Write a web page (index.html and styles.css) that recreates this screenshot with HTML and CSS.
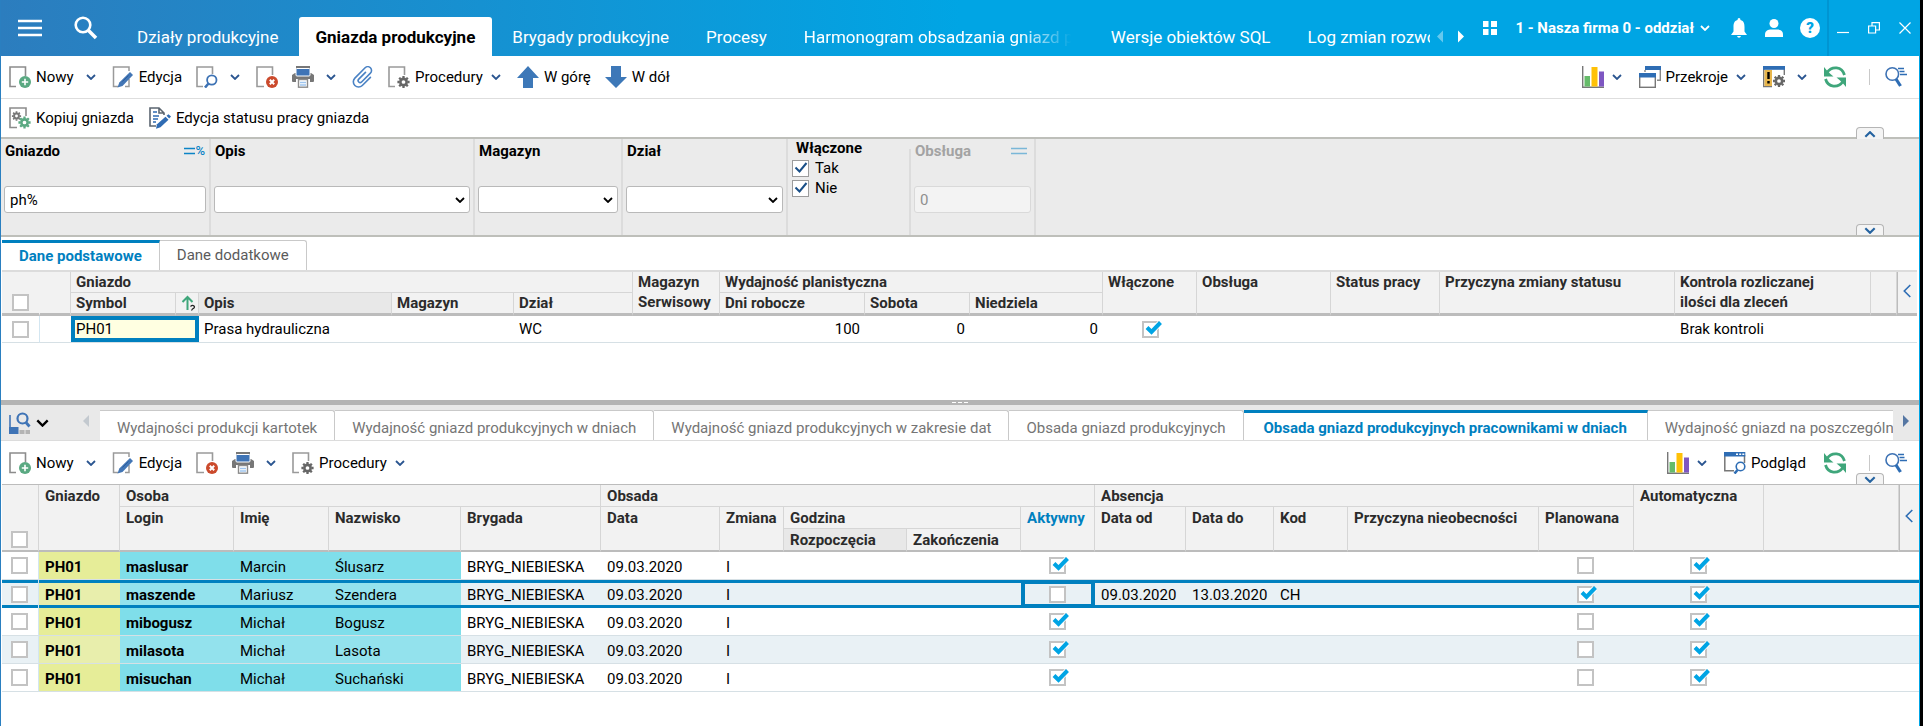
FILE: index.html
```html
<!DOCTYPE html>
<html lang="pl">
<head>
    <meta charset="UTF-8">
    <meta name="viewport" content="width=device-width, initial-scale=1.0">
    <title>Gniazda produkcyjne</title>
    <link rel="stylesheet" href="styles.css">
</head>
<body>
    <!-- Icon set -->
    <svg class="sprite" width="0" height="0" aria-hidden="true">
        <symbol id="i-chevron" viewBox="0 0 10 6"><path d="M1 1l4 4 4-4" fill="none" stroke="currentColor" stroke-width="1.8"/></symbol>
        <symbol id="i-new" viewBox="0 0 22 22">
            <path d="M7 20.500H1V1h15.500v9" fill="none" stroke="#8c8c8c" stroke-width="1.600"/>
            <circle cx="16" cy="16" r="6" fill="#5aa982"/>
            <path d="M16 12.800v6.400M12.800 16h6.400" stroke="#fff" stroke-width="1.600"/>
        </symbol>
        <symbol id="i-edit" viewBox="0 0 22 22">
            <path d="M6 20.500H1.500V1h15.500v4M17 13v7.500h-4" fill="none" stroke="#9a9a9a" stroke-width="1.500"/>
            <path d="M5.500 21.500l1.800-5L18 6l3 3L10.500 20z" fill="#4376b5"/>
            <path d="M10.500 15.500l6-6" stroke="#2a5d9c" stroke-width="1"/>
        </symbol>
        <symbol id="i-lookup" viewBox="0 0 22 22">
            <path d="M7 20.500H1V1h15.500v7" fill="none" stroke="#9a9a9a" stroke-width="1.600"/>
            <circle cx="15.800" cy="14" r="4.700" fill="#fff" stroke="#3d72b4" stroke-width="1.800"/>
            <path d="M12.500 17.500L9 21.500" stroke="#3d72b4" stroke-width="2.600"/>
        </symbol>
        <symbol id="i-delete" viewBox="0 0 22 22">
            <path d="M8 20.500H1V1h15.500v8" fill="none" stroke="#9a9a9a" stroke-width="1.600"/>
            <circle cx="16" cy="16" r="6" fill="#cb4a2c"/>
            <path d="M13.800 13.800l4.400 4.400M18.200 13.800l-4.400 4.400" stroke="#fff" stroke-width="2"/>
        </symbol>
        <symbol id="i-print" viewBox="0 0 22 22">
            <path d="M5 4V1h12v3" fill="none" stroke="#777" stroke-width="2"/>
            <path d="M0 9l3-2h16l3 2v6q0 1-1 1h-3v-3H4v3H1q-1 0-1-1z" fill="#777"/>
            <rect x="4" y="2.500" width="14" height="7.500" rx="1" fill="#3f74b6" stroke="#fff"/>
            <rect x="6.500" y="13.500" width="9" height="7.700" fill="#fff" stroke="#8b8b8b" stroke-width="1.400"/>
            <path d="M8 16.500h6M8 19h6" stroke="#9fc5ee" stroke-width="1.500"/>
        </symbol>
        <symbol id="i-clip" viewBox="0 0 22 22">
            <path d="M9.500 6v9.500a2 2 0 0 0 4 0V3a3.750 3.750 0 0 0-7.500 0v14.500a5.250 5.250 0 0 0 10.500 0V6" transform="rotate(45 11 11)" fill="none" stroke="#4a82c4" stroke-width="1.600" stroke-linecap="round"/>
        </symbol>
        <symbol id="i-gear" viewBox="-8 -8 16 16">
            <circle r="3.900" fill="none" stroke="currentColor" stroke-width="3.200"/>
            <path d="M0-5v-2.500M0 5v2.500M-5 0h-2.500M5 0h2.500M3.600-3.600l1.700-1.700M-3.600-3.600l-1.700-1.700M3.600 3.600l1.700 1.700M-3.600 3.600l-1.700 1.700" stroke="currentColor" stroke-width="2.800"/>
        </symbol>
        <symbol id="i-proc" viewBox="0 0 22 22">
            <path d="M7 20.500H1V1h15.500v8" fill="none" stroke="#9a9a9a" stroke-width="1.600"/>
            <use href="#i-gear" x="9" y="9.500" width="13" height="13" color="#666"/>
        </symbol>
        <symbol id="i-up" viewBox="0 0 22 22"><path d="M11 0l11 12h-6v10H6V12H0z" fill="#3d78b8"/></symbol>
        <symbol id="i-down" viewBox="0 0 22 22"><path d="M11 22L0 11h6V0h10v11h6z" fill="#3d78b8"/></symbol>
        <symbol id="i-copy" viewBox="0 0 22 22">
            <path d="M8 20.500H1V1h16v8" fill="none" stroke="#8c8c8c" stroke-width="1.600"/>
            <use href="#i-gear" x="2.500" y="4" width="10" height="10" color="#777"/>
            <use href="#i-gear" x="9" y="9" width="13" height="13" color="#5aa982"/>
        </symbol>
        <symbol id="i-status" viewBox="0 0 22 22">
            <path d="M7 19H1V1h9l5 5v2M10 1v5h5" fill="none" stroke="#5b6570" stroke-width="1.600"/>
            <path d="M4 5h4M4 9h6M4 12h5M4 15h3" stroke="#2f6bb3" stroke-width="1.500"/>
            <path d="M7 21.800l1-4.500 8.500-7.500 3 3-8 7.500z" fill="#2f6bb3"/>
            <path d="M17.500 8.800l2-1.600 2.500 2.200-1.800 2z" fill="#2f6bb3"/>
        </symbol>
        <symbol id="i-chart" viewBox="0 0 22 22">
            <path d="M.7 0v21.300H22" fill="none" stroke="#777" stroke-width="1.400"/>
            <rect x="2.500" y="10" width="5.500" height="10.500" fill="#66bb6a"/>
            <rect x="9.500" y="1" width="6" height="19.500" fill="#ffc107"/>
            <rect x="17" y="5.500" width="5" height="15" fill="#7e57c2"/>
        </symbol>
        <symbol id="i-windows" viewBox="0 0 22 22">
            <path d="M18 14.300h3.300V2M6 4v2" fill="none" stroke="#888" stroke-width="1.400"/>
            <rect x="6" width="16" height="4" fill="#2e6db4"/>
            <rect x=".7" y="8" width="15.600" height="13.300" fill="#fff" stroke="#777" stroke-width="1.400"/>
            <rect y="7" width="17" height="4.500" fill="#2e6db4"/>
        </symbol>
        <symbol id="i-warn" viewBox="0 0 22 22">
            <path d="M.7 3v17.600H9M21.300 3v6" fill="none" stroke="#777" stroke-width="1.400"/>
            <rect x="1.500" y="4" width="7.500" height="16" fill="#e8b64c"/>
            <rect width="22" height="3.800" fill="#2e6db4"/>
            <path d="M5.500 6v7M5.500 15v2.500" stroke="#000" stroke-width="2.400"/>
            <use href="#i-gear" x="9.500" y="8.500" width="13" height="13" color="#666"/>
        </symbol>
        <symbol id="i-refresh" viewBox="0 0 22 22">
            <path d="M20.500 9C18 .5 8-.5 3 6.500" fill="none" stroke="#3fa67b" stroke-width="2.800"/>
            <path d="M0 1v9.500h9.500L6.500 8 2.500 4z" fill="#3fa67b"/>
            <path d="M1.500 13C4 21.500 14 22.500 19 15.500" fill="none" stroke="#3fa67b" stroke-width="2.800"/>
            <path d="M22 21v-9.500h-9.500l3 2.500 4 4z" fill="#3fa67b"/>
        </symbol>
        <symbol id="i-find" viewBox="0 0 22 22">
            <circle cx="7.300" cy="8" r="6.300" fill="none" stroke="#3d72b4" stroke-width="1.600"/>
            <path d="M11 13l4.500 7" stroke="#2e6db4" stroke-width="3.200"/>
            <path d="M13 2.500h6M14.500 5.500h5M15 8.500h7" stroke="#2e6db4" stroke-width="1.500"/>
        </symbol>
        <symbol id="i-preview" viewBox="0 0 22 22">
            <path d="M.8 3v15.700H10M20.500 3v8" fill="none" stroke="#777" stroke-width="1.500"/>
            <rect width="21.300" height="4.500" fill="#2e6db4"/>
            <path d="M12 2.200h2M15.200 2.200h2M18.300 2.200h2" stroke="#fff" stroke-width="1.400"/>
            <circle cx="16.500" cy="14.500" r="4.300" fill="#fff" stroke="#2e6db4" stroke-width="1.600"/>
            <path d="M13.500 18L10.500 21.500" stroke="#2e6db4" stroke-width="2.600"/>
        </symbol>
        <symbol id="i-panel" viewBox="0 0 22 22">
            <path d="M1 3v13" stroke="#3f74b6" stroke-width="1.600"/>
            <rect y="15" width="9.500" height="7" fill="#3f74b6"/>
            <rect x="10.500" y="18" width="5" height="4" fill="#b4b4b4"/>
            <rect x="16.500" y="18" width="4.500" height="4" fill="#b4b4b4"/>
            <circle cx="13.500" cy="6.500" r="5" fill="none" stroke="#3f74b6" stroke-width="2.200"/>
            <path d="M17 10.500l3.500 4" stroke="#3f74b6" stroke-width="2.800"/>
        </symbol>
        <symbol id="i-equals" viewBox="0 0 16 8" preserveAspectRatio="none"><path d="M0 1.500h16M0 6.500h16" stroke="currentColor" stroke-width="1.500"/></symbol>
        <symbol id="i-left" viewBox="0 0 6 12"><path d="M6 0v12L0 6z" fill="currentColor"/></symbol>
        <symbol id="i-right" viewBox="0 0 6 12"><path d="M0 0v12l6-6z" fill="currentColor"/></symbol>
        <symbol id="i-collapse" viewBox="0 0 8 14"><path d="M7.300 1L1.300 7l6 6" fill="none" stroke="#2e6db4" stroke-width="1.600"/></symbol>
    </svg>

    <div class="app">
        <header class="topbar">
            <button class="menu-btn" aria-label="Menu">
                <svg width="24" height="18" viewBox="0 0 24 18"><path d="M0 2h24M0 9h24M0 16h24" stroke="#fff" stroke-width="2.600"/></svg>
            </button>
            <button class="search-btn" aria-label="Szukaj">
                <svg width="24" height="24" viewBox="0 0 24 24"><circle cx="9" cy="9" r="7.300" fill="none" stroke="#fff" stroke-width="2.600"/><path d="M14 14l8 8" stroke="#fff" stroke-width="3.600"/></svg>
            </button>
            <nav class="app-tabs">
                <a class="app-tab" href="#">Działy produkcyjne</a>
                <a class="app-tab active" href="#">Gniazda produkcyjne</a>
                <a class="app-tab" href="#">Brygady produkcyjne</a>
                <a class="app-tab" href="#">Procesy</a>
                <a class="app-tab" href="#"><span class="fade">Harmonogram obsadzania gniazd pr</span></a>
                <a class="app-tab" href="#">Wersje obiektów SQL</a>
                <a class="app-tab" href="#">Log zmian rozwo</a>
            </nav>
            <div class="app-arrows">
                <button class="dim" aria-label="Poprzednie"><svg width="6" height="13"><use href="#i-left"/></svg></button>
                <button aria-label="Następne"><svg width="6" height="13"><use href="#i-right"/></svg></button>
            </div>
            <div class="account">
                <button aria-label="Moduły"><svg width="14" height="14" viewBox="0 0 14 14" fill="#fff"><path d="M0 0h5.500v6H0zM8 0h6v6H8zM0 8h5.500v6H0zM8 8h6v6H8z"/></svg></button>
                <button class="company">1 - Nasza firma 0 - oddział<svg width="10" height="6"><use href="#i-chevron"/></svg></button>
                <button aria-label="Powiadomienia"><svg width="18" height="20" viewBox="0 0 18 20" fill="#fff"><path d="M9 0q1.500 0 1.500 2C14 3 14.500 6 14.500 9v4.500L17 17H1l2.500-3.500V9c0-3 .5-6 4-7Q7.500 0 9 0zM7 18h4q-.5 1.700-2 1.700T7 18z"/></svg></button>
                <button aria-label="Profil"><svg width="18" height="18" viewBox="0 0 18 18" fill="#fff"><circle cx="9" cy="4.500" r="4.500"/><path d="M0 18v-2.500C0 11.500 3.500 10.500 6 10.500h6c2.500 0 6 1 6 5V18z"/></svg></button>
                <button class="help" aria-label="Pomoc">?</button>
            </div>
            <div class="window-btns">
                <button aria-label="Minimalizuj"><svg width="12" height="12" viewBox="0 0 12 12"><path d="M0 10.500h12" stroke="#fff" stroke-width="1.200"/></svg></button>
                <button aria-label="Przywróć"><svg width="12" height="12" viewBox="0 0 12 12"><path d="M.6 4h7v7h-7zM4 4V.6h7.400V8H7.600" fill="none" stroke="#fff" stroke-width="1.200"/></svg></button>
                <button aria-label="Zamknij"><svg width="12" height="12" viewBox="0 0 12 12"><path d="M.5.500l11 11M11.500.500l-11 11" stroke="#fff" stroke-width="1.200"/></svg></button>
            </div>
        </header>

        <div class="toolbar">
            <div class="tool"><button class="btn"><svg class="icon"><use href="#i-new"/></svg>Nowy</button><button class="drop" aria-label="Więcej"><svg><use href="#i-chevron"/></svg></button></div>
            <button class="btn"><svg class="icon"><use href="#i-edit"/></svg>Edycja</button>
            <div class="tool"><button class="btn" aria-label="Podgląd"><svg class="icon"><use href="#i-lookup"/></svg></button><button class="drop" aria-label="Więcej"><svg><use href="#i-chevron"/></svg></button></div>
            <button class="btn" aria-label="Usuń"><svg class="icon"><use href="#i-delete"/></svg></button>
            <div class="tool"><button class="btn" aria-label="Drukuj"><svg class="icon"><use href="#i-print"/></svg></button><button class="drop" aria-label="Więcej"><svg><use href="#i-chevron"/></svg></button></div>
            <button class="btn" aria-label="Załączniki"><svg class="icon"><use href="#i-clip"/></svg></button>
            <div class="tool tight"><button class="btn"><svg class="icon"><use href="#i-proc"/></svg>Procedury</button><button class="drop" aria-label="Więcej"><svg><use href="#i-chevron"/></svg></button></div>
            <button class="btn"><svg class="icon"><use href="#i-up"/></svg>W górę</button>
            <button class="btn"><svg class="icon"><use href="#i-down"/></svg>W dół</button>
            <span class="spacer"></span>
            <div class="tool tight"><button class="btn" aria-label="Wykres"><svg class="icon"><use href="#i-chart"/></svg></button><button class="drop" aria-label="Więcej"><svg><use href="#i-chevron"/></svg></button></div>
            <div class="tool tight"><button class="btn"><svg class="icon"><use href="#i-windows"/></svg>Przekroje</button><button class="drop" aria-label="Więcej"><svg><use href="#i-chevron"/></svg></button></div>
            <div class="tool"><button class="btn" aria-label="Ustawienia"><svg class="icon"><use href="#i-warn"/></svg></button><button class="drop" aria-label="Więcej"><svg><use href="#i-chevron"/></svg></button></div>
            <button class="btn" aria-label="Odśwież"><svg class="icon"><use href="#i-refresh"/></svg></button>
            <button class="btn find" aria-label="Znajdź"><svg class="icon"><use href="#i-find"/></svg></button>
        </div>

        <div class="toolbar second">
            <button class="btn"><svg class="icon"><use href="#i-copy"/></svg>Kopiuj gniazda</button>
            <button class="btn"><svg class="icon"><use href="#i-status"/></svg>Edycja statusu pracy gniazda</button>
        </div>

        <form class="filters">
            <button type="button" class="handle handle-top" aria-label="Zwiń"><svg><use href="#i-chevron"/></svg></button>
            <div class="filter f-gniazdo">
                <div class="filter-head"><label for="gniazdo">Gniazdo</label><span class="oper"><svg><use href="#i-equals"/></svg>%</span></div>
                <input id="gniazdo" type="text" value="ph%">
            </div>
            <div class="filter f-opis">
                <div class="filter-head"><label for="opis">Opis</label></div>
                <select id="opis"><option></option></select>
            </div>
            <div class="filter f-magazyn">
                <div class="filter-head"><label for="magazyn">Magazyn</label></div>
                <select id="magazyn"><option></option></select>
            </div>
            <div class="filter f-dzial">
                <div class="filter-head"><label for="dzial">Dział</label></div>
                <select id="dzial"><option></option></select>
            </div>
            <fieldset class="filter f-wlaczone">
                <legend>Włączone</legend>
                <label><input type="checkbox" checked>Tak</label>
                <label><input type="checkbox" checked>Nie</label>
            </fieldset>
            <div class="filter f-obsluga">
                <div class="filter-head"><label for="obsluga">Obsługa</label><span class="oper"><svg><use href="#i-equals"/></svg></span></div>
                <input id="obsluga" type="text" value="0" disabled>
            </div>
            <button type="button" class="handle handle-bottom" aria-label="Rozwiń"><svg><use href="#i-chevron"/></svg></button>
        </form>

        <section class="master">
            <nav class="tabs">
                <a class="tab active" href="#">Dane podstawowe</a>
                <a class="tab" href="#">Dane dodatkowe</a>
            </nav>
            <table class="grid grid-master">
                <colgroup>
                    <col style="width: 38px"><col style="width: 31px"><col style="width: 105px"><col style="width: 23px">
                    <col style="width: 193px"><col style="width: 122px"><col style="width: 119px"><col style="width: 87px">
                    <col style="width: 145px"><col style="width: 105px"><col style="width: 133px"><col style="width: 94px">
                    <col style="width: 134px"><col style="width: 109px"><col style="width: 235px"><col style="width: 196px">
                    <col><col style="width: 20px">
                </colgroup>
                <thead>
                    <tr>
                        <th class="pick" rowspan="2"><input type="checkbox" aria-label="Zaznacz wszystko"></th>
                        <th rowspan="2"></th>
                        <th colspan="5">Gniazdo</th>
                        <th rowspan="2">Magazyn<br>Serwisowy</th>
                        <th colspan="3">Wydajność planistyczna</th>
                        <th rowspan="2">Włączone</th>
                        <th rowspan="2">Obsługa</th>
                        <th rowspan="2">Status pracy</th>
                        <th rowspan="2">Przyczyna zmiany statusu</th>
                        <th rowspan="2">Kontrola rozliczanej<br>ilości dla zleceń</th>
                        <th rowspan="2"></th>
                        <th class="side" rowspan="2"><button aria-label="Rozwiń panel"><svg><use href="#i-collapse"/></svg></button></th>
                    </tr>
                    <tr class="leaf">
                        <th>Symbol</th>
                        <th class="sort"><svg width="15" height="17" viewBox="0 0 15 17"><path d="M6.500 15V2M1.500 7l5-5 5 5" fill="none" stroke="#3fa67b" stroke-width="2"/><path d="M9.500 11.500q2-2 3.500-.5t-1.500 3l-1 1.500" fill="none" stroke="#222" stroke-width="1.200"/></svg></th>
                        <th class="dark">Opis</th>
                        <th>Magazyn</th>
                        <th>Dział</th>
                        <th>Dni robocze</th>
                        <th>Sobota</th>
                        <th>Niedziela</th>
                    </tr>
                </thead>
                <tbody>
                    <tr>
                        <td class="pick line"><input type="checkbox" aria-label="Zaznacz"></td>
                        <td></td>
                        <td class="focus" colspan="2">PH01</td>
                        <td>Prasa hydrauliczna</td>
                        <td></td>
                        <td>WC</td>
                        <td></td>
                        <td class="num">100</td>
                        <td class="num">0</td>
                        <td class="num">0</td>
                        <td class="check"><input type="checkbox" checked aria-label="Włączone"></td>
                        <td></td>
                        <td></td>
                        <td></td>
                        <td>Brak kontroli</td>
                        <td></td>
                        <td></td>
                    </tr>
                </tbody>
            </table>
        </section>

        <div class="splitter"><i></i><i></i><i></i></div>

        <div class="detail-tabs">
            <button class="views" aria-label="Widok"><svg class="icon"><use href="#i-panel"/></svg><svg class="views-drop"><use href="#i-chevron"/></svg></button>
            <button class="scroll prev" aria-label="Poprzednie"><svg width="6" height="12"><use href="#i-left"/></svg></button>
            <nav class="tabs">
                <a class="tab" href="#">Wydajności produkcji kartotek</a>
                <a class="tab" href="#">Wydajność gniazd produkcyjnych w dniach</a>
                <a class="tab" href="#">Wydajność gniazd produkcyjnych w zakresie dat</a>
                <a class="tab" href="#">Obsada gniazd produkcyjnych</a>
                <a class="tab active" href="#">Obsada gniazd produkcyjnych pracownikami w dniach</a>
                <a class="tab" href="#">Wydajność gniazd na poszczególnych</a>
            </nav>
            <button class="scroll next" aria-label="Następne"><svg width="6" height="12"><use href="#i-right"/></svg></button>
        </div>

        <div class="toolbar detail-toolbar">
            <div class="tool"><button class="btn"><svg class="icon"><use href="#i-new"/></svg>Nowy</button><button class="drop" aria-label="Więcej"><svg><use href="#i-chevron"/></svg></button></div>
            <button class="btn"><svg class="icon"><use href="#i-edit"/></svg>Edycja</button>
            <button class="btn" aria-label="Usuń"><svg class="icon"><use href="#i-delete"/></svg></button>
            <div class="tool"><button class="btn" aria-label="Drukuj"><svg class="icon"><use href="#i-print"/></svg></button><button class="drop" aria-label="Więcej"><svg><use href="#i-chevron"/></svg></button></div>
            <div class="tool tight"><button class="btn"><svg class="icon"><use href="#i-proc"/></svg>Procedury</button><button class="drop" aria-label="Więcej"><svg><use href="#i-chevron"/></svg></button></div>
            <span class="spacer"></span>
            <div class="tool tight"><button class="btn" aria-label="Wykres"><svg class="icon"><use href="#i-chart"/></svg></button><button class="drop" aria-label="Więcej"><svg><use href="#i-chevron"/></svg></button></div>
            <button class="btn preview"><svg class="icon"><use href="#i-preview"/></svg>Podgląd</button>
            <button class="btn" aria-label="Odśwież"><svg class="icon"><use href="#i-refresh"/></svg></button>
            <button class="btn find" aria-label="Znajdź"><svg class="icon"><use href="#i-find"/></svg></button>
            <button class="handle handle-bottom" aria-label="Rozwiń"><svg><use href="#i-chevron"/></svg></button>
        </div>

        <section class="detail">
            <table class="grid grid-detail">
                <colgroup>
                    <col style="width: 37px"><col style="width: 81px"><col style="width: 114px"><col style="width: 95px">
                    <col style="width: 132px"><col style="width: 140px"><col style="width: 119px"><col style="width: 64px">
                    <col style="width: 123px"><col style="width: 114px"><col style="width: 74px"><col style="width: 91px">
                    <col style="width: 88px"><col style="width: 74px"><col style="width: 191px"><col style="width: 95px">
                    <col style="width: 130px"><col><col style="width: 20px">
                </colgroup>
                <thead>
                    <tr>
                        <th class="pick" rowspan="3"><input type="checkbox" aria-label="Zaznacz wszystko"></th>
                        <th rowspan="3">Gniazdo</th>
                        <th colspan="4">Osoba</th>
                        <th colspan="5">Obsada</th>
                        <th colspan="5">Absencja</th>
                        <th rowspan="3">Automatyczna</th>
                        <th rowspan="3"></th>
                        <th class="side" rowspan="3"><button aria-label="Rozwiń panel"><svg><use href="#i-collapse"/></svg></button></th>
                    </tr>
                    <tr>
                        <th rowspan="2">Login</th>
                        <th rowspan="2">Imię</th>
                        <th rowspan="2">Nazwisko</th>
                        <th rowspan="2">Brygada</th>
                        <th rowspan="2">Data</th>
                        <th rowspan="2">Zmiana</th>
                        <th colspan="2">Godzina</th>
                        <th class="current" rowspan="2">Aktywny</th>
                        <th rowspan="2">Data od</th>
                        <th rowspan="2">Data do</th>
                        <th rowspan="2">Kod</th>
                        <th rowspan="2">Przyczyna nieobecności</th>
                        <th rowspan="2">Planowana</th>
                    </tr>
                    <tr class="leaf">
                        <th class="dark">Rozpoczęcia</th>
                        <th>Zakończenia</th>
                    </tr>
                </thead>
                <tbody>
                    <tr>
                        <td class="pick line"><input type="checkbox" aria-label="Zaznacz"></td>
                        <td class="socket">PH01</td><td class="person login">maslusar</td><td class="person">Marcin</td><td class="person">Ślusarz</td>
                        <td>BRYG_NIEBIESKA</td><td>09.03.2020</td><td>I</td><td></td><td></td>
                        <td class="check"><input type="checkbox" checked aria-label="Aktywny"></td>
                        <td></td><td></td><td></td><td></td>
                        <td class="check"><input type="checkbox" aria-label="Planowana"></td>
                        <td class="check"><input type="checkbox" checked aria-label="Automatyczna"></td>
                        <td></td><td></td>
                    </tr>
                    <tr class="selected">
                        <td class="pick line"><input type="checkbox" aria-label="Zaznacz"></td>
                        <td class="socket">PH01</td><td class="person login">maszende</td><td class="person">Mariusz</td><td class="person">Szendera</td>
                        <td>BRYG_NIEBIESKA</td><td>09.03.2020</td><td>I</td><td></td><td></td>
                        <td class="check focus"><input type="checkbox" aria-label="Aktywny"></td>
                        <td>09.03.2020</td><td>13.03.2020</td><td>CH</td><td></td>
                        <td class="check"><input type="checkbox" checked aria-label="Planowana"></td>
                        <td class="check"><input type="checkbox" checked aria-label="Automatyczna"></td>
                        <td></td><td></td>
                    </tr>
                    <tr>
                        <td class="pick line"><input type="checkbox" aria-label="Zaznacz"></td>
                        <td class="socket">PH01</td><td class="person login">mibogusz</td><td class="person">Michał</td><td class="person">Bogusz</td>
                        <td>BRYG_NIEBIESKA</td><td>09.03.2020</td><td>I</td><td></td><td></td>
                        <td class="check"><input type="checkbox" checked aria-label="Aktywny"></td>
                        <td></td><td></td><td></td><td></td>
                        <td class="check"><input type="checkbox" aria-label="Planowana"></td>
                        <td class="check"><input type="checkbox" checked aria-label="Automatyczna"></td>
                        <td></td><td></td>
                    </tr>
                    <tr>
                        <td class="pick line"><input type="checkbox" aria-label="Zaznacz"></td>
                        <td class="socket">PH01</td><td class="person login">milasota</td><td class="person">Michał</td><td class="person">Lasota</td>
                        <td>BRYG_NIEBIESKA</td><td>09.03.2020</td><td>I</td><td></td><td></td>
                        <td class="check"><input type="checkbox" checked aria-label="Aktywny"></td>
                        <td></td><td></td><td></td><td></td>
                        <td class="check"><input type="checkbox" aria-label="Planowana"></td>
                        <td class="check"><input type="checkbox" checked aria-label="Automatyczna"></td>
                        <td></td><td></td>
                    </tr>
                    <tr>
                        <td class="pick line"><input type="checkbox" aria-label="Zaznacz"></td>
                        <td class="socket">PH01</td><td class="person login">misuchan</td><td class="person">Michał</td><td class="person">Suchański</td>
                        <td>BRYG_NIEBIESKA</td><td>09.03.2020</td><td>I</td><td></td><td></td>
                        <td class="check"><input type="checkbox" checked aria-label="Aktywny"></td>
                        <td></td><td></td><td></td><td></td>
                        <td class="check"><input type="checkbox" aria-label="Planowana"></td>
                        <td class="check"><input type="checkbox" checked aria-label="Automatyczna"></td>
                        <td></td><td></td>
                    </tr>
                </tbody>
            </table>
        </section>
    </div>
</body>
</html>
```

FILE: styles.css
```css
* {
    box-sizing: border-box;
}

body {
    margin: 0;
    padding-right: 3px;
    background: #000;
    color: #000;
    font-family: Roboto, "Liberation Sans", sans-serif;
    font-size: 15px;
    line-height: 20px;
}

button,
input,
select {
    font: inherit;
    color: inherit;
}

button {
    padding: 0;
    border: none;
    background: none;
    cursor: pointer;
}

a {
    text-decoration: none;
}

svg {
    display: block;
    flex: none;
}

.sprite {
    position: absolute;
}

.app {
    display: flex;
    flex-direction: column;
    min-height: 100vh;
    background: #fff;
    border-left: 1px solid #2a7fc0;
    border-right: 1px solid #00a4e4;
}

/* Top bar */
.topbar {
    display: flex;
    height: 56px;
    padding-left: 17px;
    color: #fff;
    background: linear-gradient(90deg, #2c7dbe 0, #00a5e4 50%);
}

.menu-btn,
.search-btn {
    display: flex;
    align-items: center;
}

.search-btn {
    margin: 0 22px 0 32px;
}

.app-tabs {
    display: flex;
    flex: 1;
    gap: 3px;
    min-width: 0;
    padding-top: 17px;
    overflow: hidden;
}

.app-tab {
    flex: none;
    padding: 0 17px;
    color: #fff;
    font-size: 17px;
    line-height: 41px;
    white-space: nowrap;
}

.app-tab:last-child {
    padding-right: 0;
}

.app-tab.active {
    color: #000;
    font-weight: bold;
    background: #fff;
    border-radius: 3px 3px 0 0;
}

.fade {
    display: block;
    width: 270px;
    overflow: hidden;
    mask-image: linear-gradient(90deg, #000 80%, transparent 99%);
}

.app-arrows {
    display: flex;
    gap: 15px;
    padding: 16px 19px 0 7px;
}

.app-arrows .dim {
    opacity: 0.4;
}

.account {
    display: flex;
    align-items: center;
    gap: 17px;
    padding: 0 7px 0 0;
}

.company {
    display: flex;
    align-items: center;
    gap: 6px;
    margin: 0 3px 0 1px;
    font-weight: bold;
}

.help {
    width: 20px;
    height: 20px;
    border-radius: 50%;
    background: #fff;
    color: #00a4e4;
    font-weight: 900;
    text-align: center;
}

.window-btns {
    display: flex;
    align-items: center;
    gap: 19px;
    padding: 0 8px;
    border-left: 2px solid #0095d2;
}

/* Toolbars */
.toolbar {
    position: relative;
    display: flex;
    align-items: center;
    gap: 14px;
    height: 43px;
    padding: 0 12px 0 8px;
    border-bottom: 1px solid #dedede;
}

.toolbar.second {
    gap: 15px;
    height: 38px;
    border-bottom: none;
}

.btn {
    display: flex;
    align-items: center;
    gap: 5px;
}

.icon {
    width: 22px;
    height: 22px;
}

.tool {
    display: flex;
    gap: 12px;
    margin-right: 2px;
}

.tool.tight {
    gap: 8px;
}

.drop svg {
    width: 10px;
    height: 6px;
    color: #2a5590;
}

.spacer {
    flex: 1;
}

.spacer ~ .tool {
    margin-right: 3px;
}

.preview {
    margin-right: 4px;
}

.find {
    margin-left: 9px;
    padding-left: 16px;
    background: linear-gradient(#c9c9c9, #c9c9c9) 0 50% / 1px 16px no-repeat;
}

/* Filter panel */
.filters {
    position: relative;
    display: flex;
    height: 100px;
    background: #ebebeb;
    border-top: 2px solid #bebfba;
    border-bottom: 2px solid #bebfba;
}

.filter {
    display: flex;
    flex-direction: column;
    gap: 25px;
    margin: 0;
    padding: 2px 3px 0;
    border: none;
    border-right: 2px solid #dcdcdc;
}

.filter-head {
    display: flex;
    justify-content: space-between;
    align-items: center;
    padding: 0 1px;
    font-weight: bold;
}

.oper {
    display: flex;
    align-items: center;
    color: #0b84c6;
    font-size: 13px;
    font-weight: 500;
}

.oper svg {
    width: 11px;
    height: 8px;
}

.filter input[type="text"],
.filter select {
    width: 100%;
    height: 27px;
    padding: 0 5px;
    border: 1px solid #b9b9b9;
    border-radius: 3px;
    background-color: #fff;
}

.filter select {
    appearance: none;
    background-image: url("data:image/svg+xml,%3Csvg xmlns='http://www.w3.org/2000/svg' width='10' height='6'%3E%3Cpath d='M1 1l4 4 4-4' fill='none' stroke='%23000' stroke-width='1.8'/%3E%3C/svg%3E");
    background-repeat: no-repeat;
    background-position: right 4px center;
}

.f-gniazdo {
    width: 210px;
}

.f-opis {
    width: 264px;
}

.f-magazyn {
    width: 148px;
}

.f-dzial {
    width: 165px;
}

.f-wlaczone {
    display: block;
    width: 123px;
    min-width: 0;
    padding: 0 4px;
}

.f-wlaczone legend {
    padding: 0 4px;
    font-weight: bold;
    line-height: 19px;
}

.f-wlaczone label {
    display: flex;
    align-items: center;
    gap: 6px;
}

.f-obsluga {
    width: 125px;
}

.f-obsluga label {
    color: #a3a3a3;
}

.f-obsluga .oper {
    opacity: 0.5;
}

.f-obsluga .oper svg {
    width: 16px;
    margin-right: 3px;
}

.filter input[type="text"]:disabled {
    color: #8f8f8f;
    background: #f3f3f3;
    border-color: #d9d9d9;
}

.f-wlaczone input {
    appearance: none;
    width: 17px;
    height: 17px;
    margin: 0;
    border: 1px solid #9c9c9c;
    background: #fff url("data:image/svg+xml,%3Csvg xmlns='http://www.w3.org/2000/svg' width='14' height='12'%3E%3Cpath d='M1.500 5.500l4 4L12.500 1' fill='none' stroke='%23194f87' stroke-width='2'/%3E%3C/svg%3E") center no-repeat;
}

.handle {
    position: absolute;
    right: 35px;
    width: 28px;
    height: 11px;
    border: 1px solid #b5b5b5;
    border-bottom: none;
    border-radius: 4px 4px 0 0;
    background: #f4f4f4;
}

.handle svg {
    width: 14px;
    height: 7px;
    margin: 1px auto 0;
    color: #2563a0;
}

.handle-top {
    top: -12px;
    height: 12px;
}

.handle-top svg {
    transform: rotate(180deg);
}

.handle-bottom {
    bottom: 0;
}

/* Tabs */
.tabs {
    display: flex;
}

.tab {
    flex: none;
    padding: 0 17px;
    color: #5b5b5b;
    white-space: nowrap;
    background: #fff;
    border-top: 1px solid #c9c9c9;
    border-right: 1px solid #c9c9c9;
    border-radius: 0 3px 0 0;
}

.tab.active {
    color: #0080bf;
    font-weight: bold;
    border-top: 3px solid #0080bf;
    border-radius: 0;
}

.master {
    height: 163px;
    padding: 3px 2px 0 1px;
}

.master .tabs {
    border-bottom: 1px solid #dcdcdc;
}

.master .tab {
    line-height: 29px;
}

.master .tab.active {
    line-height: 27px;
}

/* Data grids */
.grid {
    width: 100%;
    table-layout: fixed;
    border-spacing: 0;
    border-top: 1px solid #dcdcdc;
}

.grid th {
    height: 21px;
    padding: 0 5px;
    color: #2b2b2b;
    font-weight: bold;
    text-align: left;
    vertical-align: top;
    background: #f2f2f2;
    border-right: 1px solid #d6d6d6;
    border-bottom: 1px solid #d6d6d6;
}

.grid th[rowspan],
.grid .leaf th {
    border-bottom: 3px solid #bcbcbc;
}

.grid-master th.pick {
    border-right-color: #f2f2f2;
}

.grid .leaf th.dark {
    background: #e8e8e8;
}

.grid th.current {
    color: #0080bf;
}

.grid th.pick {
    vertical-align: bottom;
}

.grid th.sort {
    padding: 2px 0 0 5px;
}

.grid th.side {
    padding: 0;
    vertical-align: middle;
    border-left: 1px solid #bcbcbc;
    border-right: none;
}

.grid .side svg {
    width: 8px;
    height: 14px;
    margin: 0 5px;
}

.grid td {
    height: 28px;
    padding: 2px 5px 0;
    white-space: nowrap;
    border-bottom: 1px solid #d6e0e5;
}

.grid-master td {
    height: 27px;
    padding-top: 0;
}

.grid .pick,
.grid .check {
    padding: 0;
    text-align: center;
}

.grid td.line {
    border-right: 1px solid #d3e6f1;
}

.grid .num {
    text-align: right;
}

.grid input {
    appearance: none;
    position: relative;
    display: block;
    width: 17px;
    height: 17px;
    margin: 0 auto;
    border: 2px solid #c3c3c3;
    background: #fff;
}

.grid th input {
    margin-bottom: 2px;
}

.grid input:checked::after {
    content: "";
    position: absolute;
    top: -3px;
    left: 1px;
    width: 17px;
    height: 16px;
    background: url("data:image/svg+xml,%3Csvg xmlns='http://www.w3.org/2000/svg' width='17' height='16'%3E%3Cpath d='M2 7.500l4.500 4L15 3' fill='none' stroke='%23fff' stroke-width='6'/%3E%3Cpath d='M2 7.500l4.500 4.500L15.500 2.500' fill='none' stroke='%2300a4e4' stroke-width='4'/%3E%3C/svg%3E");
}

.grid-master td.focus {
    background: #ffffe1;
    box-shadow: inset 0 0 0 4px #0080bf;
}

.grid-detail {
    border-top: 1px solid #bcbcbc;
}

.grid-detail th {
    height: 22px;
    padding: 1px 6px 0;
}

.grid-detail .leaf th {
    height: 23px;
}

.grid-detail th[rowspan],
.grid-detail .leaf th {
    border-bottom-width: 2px;
}

.grid-detail td {
    padding-left: 6px;
}

.grid-detail .pick,
.grid-detail .check {
    padding-right: 2px;
}

.grid-detail tbody tr:nth-child(even) {
    background: #e9f1f5;
}

.grid-detail .socket {
    font-weight: bold;
    background: #e6ed98;
}

.grid-detail .person {
    background: #7fdeea;
}

.grid-detail .login {
    font-weight: bold;
}

.grid-detail tr:nth-child(even) .socket {
    background: #e8eeac;
}

.grid-detail tr:nth-child(even) .person {
    background: #93e2ed;
}

.grid-detail .selected td {
    border-bottom: none;
    box-shadow: inset 0 3px #0080bf, inset 0 -3px #0080bf;
}

.grid-detail .selected td.focus {
    box-shadow: inset 0 0 0 4px #0080bf;
}

/* Lower panel */
.splitter {
    display: flex;
    justify-content: center;
    align-items: center;
    gap: 2px;
    height: 5px;
    background: #b4b4b4;
}

.splitter i {
    width: 4px;
    height: 1px;
    background: #fff;
}

.detail-tabs {
    display: flex;
    height: 36px;
    background: #e9e9e9;
    border-bottom: 1px solid #dcdcdc;
}

.detail-tabs .tabs {
    flex: 1;
    min-width: 0;
    overflow: hidden;
    padding-top: 5px;
}

.detail-tabs .tab {
    color: #757575;
    line-height: 34px;
}

.detail-tabs .tab.active {
    padding: 0 20px;
    color: #0080bf;
    line-height: 30px;
}

.views {
    display: flex;
    align-items: center;
    gap: 5px;
    padding-left: 8px;
}

.views-drop {
    width: 13px;
    height: 8px;
}

.scroll {
    display: flex;
    justify-content: center;
    width: 26px;
    padding-top: 10px;
    color: #5677a3;
}

.scroll.prev {
    width: 51px;
    padding-left: 22px;
    color: #c3c9cf;
}

.detail-toolbar {
    border-bottom: none;
}

.detail {
    flex: 1;
    padding-left: 1px;
}
```
